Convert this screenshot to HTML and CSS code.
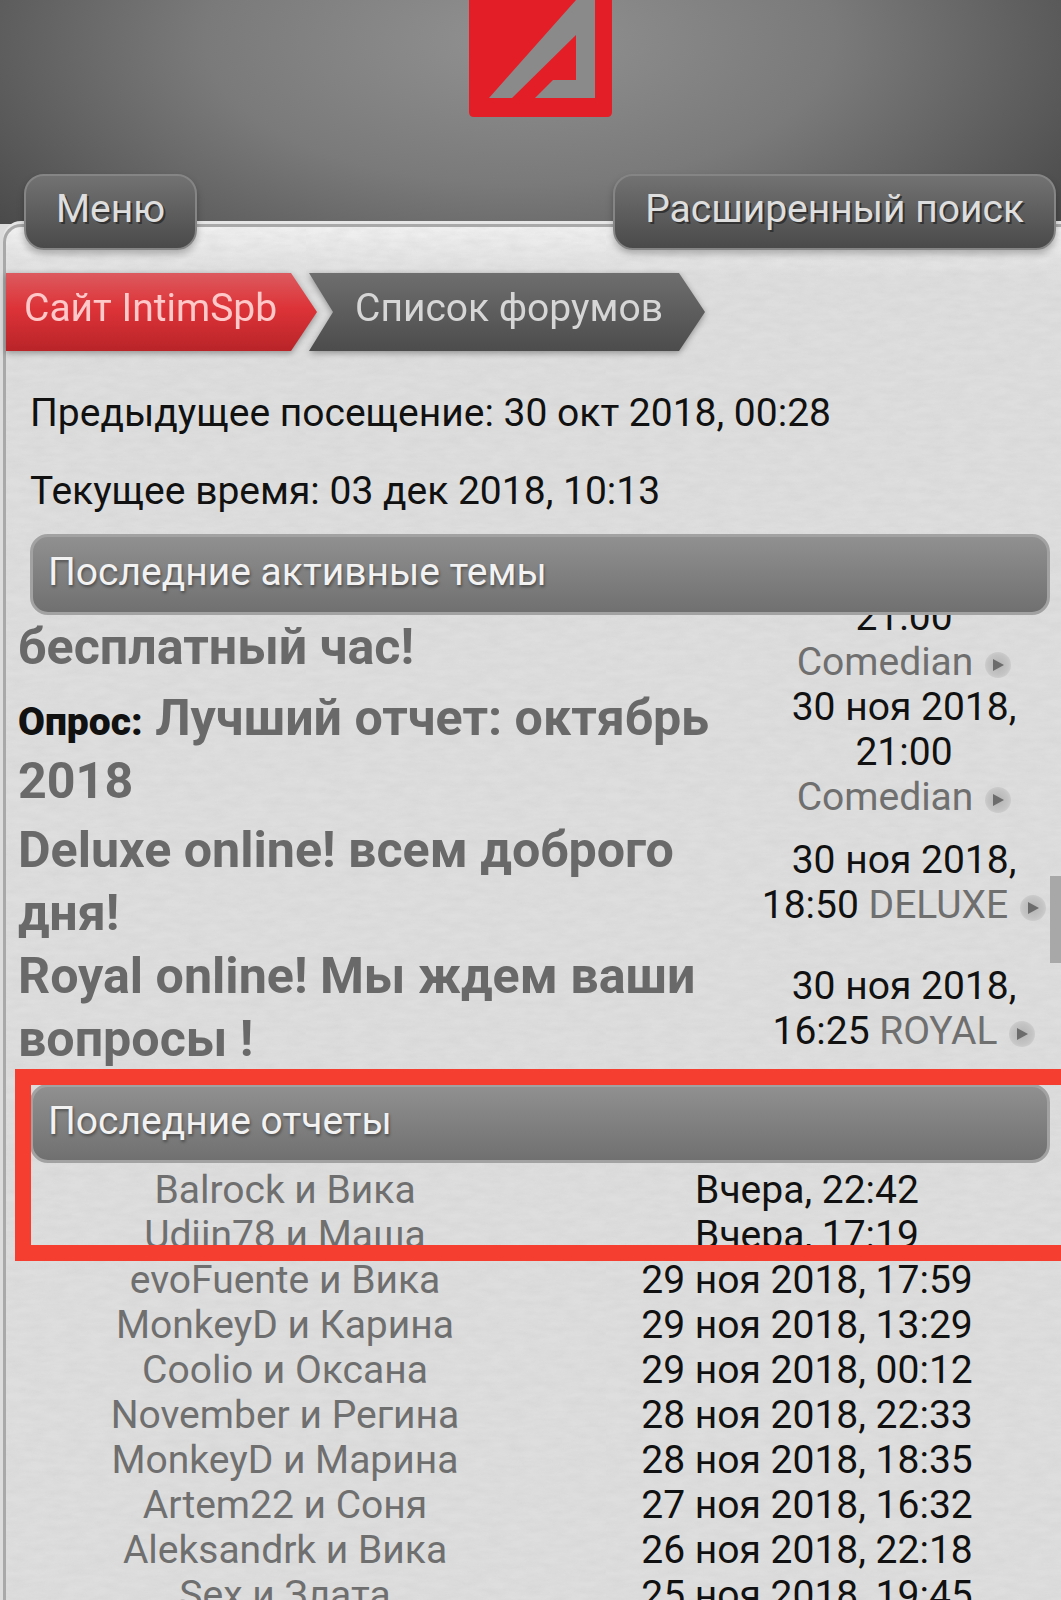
FILE: index.html
```html
<!DOCTYPE html>
<html lang="ru">
<head>
  <meta charset="UTF-8" />
  <title>IntimSpb</title>
  <link rel="stylesheet" href="styles.css">
</head>
<body>
<div class="page">

  <!-- Header with logo and the two top buttons -->
  <header class="top">
    <svg class="logo" viewBox="0 0 143 117" width="143" height="117" aria-hidden="true">
      <path class="logo-red" d="M0 0H143V112Q143 117 138 117H5Q0 117 0 112Z"/>
      <path class="logo-a" d="M20 98H43L107 35V80H84L66 98H126V0H107Z"/>
    </svg>
    <nav class="top-nav">
      <a class="top-btn" href="#">Меню</a>
      <a class="top-btn" href="#">Расширенный поиск</a>
    </nav>
  </header>

  <main class="panel">
    <!-- Breadcrumbs -->
    <div class="crumbs">
      <a class="crumb crumb-red" href="#">Сайт IntimSpb</a>
      <a class="crumb crumb-gray" href="#">Список форумов</a>
    </div>

    <p class="info info-first">Предыдущее посещение: 30 окт 2018, 00:28</p>
    <p class="info">Текущее время: 03 дек 2018, 10:13</p>

    <h2 class="bar">Последние активные темы</h2>
    <div class="topics-scroll">
      <div class="topics">
        <div class="topic topic-cut">
          <a class="topic-title" href="#">бесплатный час!</a>
          <div class="topic-date">30 ноя 2018, 21:00 <span class="author"><a href="#">Comedian</a><i class="go"></i></span></div>
        </div>
        <div class="topic topic-tall">
          <div class="topic-title"><b class="poll">Опрос:</b> <a href="#">Лучший отчет: октябрь 2018</a></div>
          <div class="topic-date">30 ноя 2018, 21:00 <span class="author"><a href="#">Comedian</a><i class="go"></i></span></div>
        </div>
        <div class="topic">
          <a class="topic-title" href="#">Deluxe online! всем доброго дня!</a>
          <div class="topic-date">30 ноя 2018, 18:50 <span class="author"><a href="#">DELUXE</a><i class="go"></i></span></div>
        </div>
        <div class="topic">
          <a class="topic-title" href="#">Royal online! Мы ждем ваши вопросы !</a>
          <div class="topic-date">30 ноя 2018, 16:25 <span class="author"><a href="#">ROYAL</a><i class="go"></i></span></div>
        </div>
      </div>
    </div>

    <h2 class="bar bar-reports">Последние отчеты</h2>
    <div class="reports">
      <a href="#">Balrock и Вика</a><span>Вчера, 22:42</span>
      <a href="#">Udjin78 и Маша</a><span>Вчера, 17:19</span>
      <a href="#">evoFuente и Вика</a><span>29 ноя 2018, 17:59</span>
      <a href="#">MonkeyD и Карина</a><span>29 ноя 2018, 13:29</span>
      <a href="#">Coolio и Оксана</a><span>29 ноя 2018, 00:12</span>
      <a href="#">November и Регина</a><span>28 ноя 2018, 22:33</span>
      <a href="#">MonkeyD и Марина</a><span>28 ноя 2018, 18:35</span>
      <a href="#">Artem22 и Соня</a><span>27 ноя 2018, 16:32</span>
      <a href="#">Aleksandrk и Вика</a><span>26 ноя 2018, 22:18</span>
      <a href="#">Sex и Злата</a><span>25 ноя 2018, 19:45</span>
    </div>
  </main>

  <!-- Overlays: page scrollbar and the red marker drawn on the screenshot -->
  <div class="scrollbar"></div>
  <div class="marker"></div>
</div>
</body>
</html>
```

FILE: styles.css
```css
/* Basic Reset */
* {
  margin: 0;
  padding: 0;
  box-sizing: border-box;
}

body {
  font-family: Roboto, "Liberation Sans", Arial, sans-serif;
  background: #dcdcdc;
  color: #111;
}

a {
  color: inherit;
  text-decoration: none;
}

.page {
  position: relative;
  height: 1600px;
  overflow: hidden;
}

/* Header */
.top {
  height: 224px;
  display: flex;
  flex-direction: column;
  background: radial-gradient(ellipse 700px 320px at 520px 40px, #919191 0%, #7a7a7a 45%, #444 100%);
}

.logo {
  display: block;
  margin-left: 469px;
  flex: none;
}

.logo-red {
  fill: #e41e26;
}

.logo-a {
  fill: #8a8a8a;
}

.top-nav {
  position: relative;
  z-index: 2;
  display: flex;
  justify-content: space-between;
  margin: 57px 5px 0 24px;
}

.top-btn {
  display: block;
  height: 76px;
  padding: 0 30px;
  line-height: 66px;
  font-size: 39px;
  color: #dedede;
  text-shadow: 2px 2px 0 #333;
  background: linear-gradient(180deg, #727272 0%, #4a4a4a 100%);
  border: 2px solid #858585;
  border-radius: 20px;
  box-shadow: 0 4px 7px rgba(0, 0, 0, 0.25);
}

/* Main panel */
.panel {
  margin-left: 3px;
  height: 1376px;
  padding-top: 46px;
  border-left: 3px solid #a9a9a9;
  border-top: 3px solid #a9a9a9;
  border-top-left-radius: 18px;
  box-shadow: 0 -3px 0 #e6e6e6;
  background-color: #dcdcdc;
  background-image:
    url("data:image/svg+xml,%3Csvg xmlns='http://www.w3.org/2000/svg' width='300' height='300'%3E%3Cfilter id='n'%3E%3CfeTurbulence type='fractalNoise' baseFrequency='.05 .16' numOctaves='3' stitchTiles='stitch'/%3E%3CfeColorMatrix values='0 0 0 0 .55 0 0 0 0 .55 0 0 0 0 .55 0 0 0 .35 -.08'/%3E%3C/filter%3E%3Crect width='300' height='300' filter='url(%23n)'/%3E%3C/svg%3E"),
    linear-gradient(180deg, #f1f1f1 0, #dedede 50px);
}

/* Breadcrumbs */
.crumbs {
  display: flex;
  height: 78px;
  filter: drop-shadow(0 2px 3px rgba(0, 0, 0, 0.35));
}

.crumb {
  height: 78px;
  line-height: 70px;
  font-size: 39px;
}

.crumb-red {
  width: 311px;
  padding-left: 18px;
  color: #ffc9c9;
  background: linear-gradient(180deg, #dc5a5e 0%, #dd3338 45%, #b82428 100%);
  clip-path: polygon(0 0, calc(100% - 26px) 0, 100% 50%, calc(100% - 26px) 100%, 0 100%);
}

.crumb-gray {
  width: 396px;
  margin-left: -8px;
  padding-left: 46px;
  color: #d6d6d6;
  background: linear-gradient(180deg, #6e6e6e 0%, #4c4c4c 100%);
  clip-path: polygon(0 0, calc(100% - 26px) 0, 100% 50%, calc(100% - 26px) 100%, 0 100%, 24px 50%);
}

.info {
  margin-left: 24px;
  font-size: 39px;
  line-height: 45px;
  margin-top: 33px;
}

.info-first {
  margin-top: 40px;
}

/* Section bars */
.bar {
  width: 1020px;
  height: 81px;
  margin: 20px 0 0 24px;
  padding-left: 15px;
  font-size: 39px;
  font-weight: 400;
  line-height: 70px;
  color: #f2f2f2;
  text-shadow: 1px 2px 3px rgba(0, 0, 0, 0.4);
  background: linear-gradient(180deg, #909090 0%, #707070 100%);
  border: 3px solid #a2a2a2;
  border-radius: 18px;
}

.bar-reports {
  height: 79px;
  margin-top: 14px;
  line-height: 68px;
}

/* Active topics, scrolled inside their own box */
.topics-scroll {
  height: 455px;
  overflow: hidden;
}

.topics {
  margin-top: -67px;
}

.topic {
  display: grid;
  grid-template-columns: 750px 296px;
  align-items: center;
  height: 126px;
}

.topic-tall {
  height: 135px;
}

.topic-tall .topic-title {
  padding-bottom: 4px;
}

.topic-cut {
  height: 135px;
  align-items: end;
}

.topic-cut .topic-title {
  padding-bottom: 5px;
}

.topic-title {
  display: block;
  padding-left: 12px;
  font-size: 50.2px;
  font-weight: 700;
  line-height: 63px;
  color: #696969;
}

.poll {
  font-size: 39px;
  line-height: 1;
  color: #111;
}

.topic-date {
  padding-top: 2px;
  margin-bottom: -2px;
  font-size: 39px;
  line-height: 45px;
  text-align: center;
}

.author {
  white-space: nowrap;
}

.author a {
  color: #6f6f6f;
}

.go {
  position: relative;
  display: inline-block;
  width: 26px;
  height: 26px;
  margin-left: 12px;
  vertical-align: -3px;
  border-radius: 50%;
  background: radial-gradient(circle, #b4b4b4 0%, #c4c4c4 55%, rgba(220, 220, 220, 0) 100%);
}

.go::after {
  content: "";
  position: absolute;
  left: 8px;
  top: 7px;
  border-left: 11px solid #6c6c6c;
  border-top: 6px solid transparent;
  border-bottom: 6px solid transparent;
}

/* Latest reports table */
.reports {
  display: grid;
  grid-template-columns: 544px 500px;
  padding-left: 7px;
  margin-top: 5px;
  font-size: 39px;
  line-height: 45px;
  text-align: center;
}

.reports a {
  color: #6f6f6f;
}

/* Overlays */
.scrollbar {
  position: absolute;
  right: 0;
  top: 876px;
  width: 11px;
  height: 87px;
  background: #a8a8a8;
}

.marker {
  position: absolute;
  left: 15px;
  top: 1069px;
  width: 1100px;
  height: 192px;
  border: 16px solid #f53e30;
}
```
